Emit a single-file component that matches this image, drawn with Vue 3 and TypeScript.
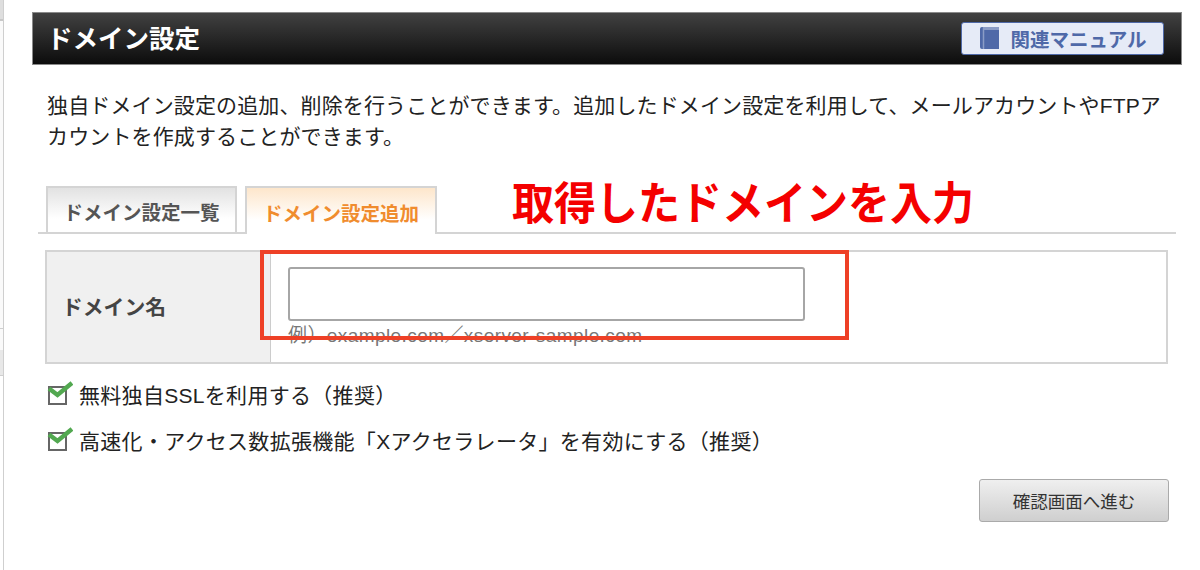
<script setup lang="ts">
const checks: string[] = [
  '無料独自SSLを利用する（推奨）',
  '高速化・アクセス数拡張機能「Xアクセラレータ」を有効にする（推奨）',
]
</script>

<template>
  <div class="page">
    <div class="edge"></div>
    <main class="content">
      <header class="head">
        <h1 class="title">ドメイン設定</h1>
        <a class="manual">
          <svg class="book" viewBox="0 0 20 24" width="20" height="24">
            <path d="M3 1h17v22H3a2 2 0 0 1-2-2V3a2 2 0 0 1 2-2z" fill="#4f69a8" />
            <path d="M4.500 1v22" stroke="#8b9cc6" stroke-width="1.500" />
            <path d="M5 1h15v3H5z" fill="#8b9cc6" />
          </svg>
          <span>関連マニュアル</span>
        </a>
      </header>

      <p class="lead">独自ドメイン設定の追加、削除を行うことができます。追加したドメイン設定を利用して、メールアカウントやFTPアカウントを作成することができます。</p>

      <nav class="tabs">
        <div class="tab">ドメイン設定一覧</div>
        <div class="tab active">ドメイン設定追加</div>
      </nav>

      <section class="form">
        <div class="label">ドメイン名</div>
        <div class="field">
          <input class="input" type="text" />
          <div class="hint">例）example.com／xserver-sample.com</div>
        </div>
      </section>

      <div v-for="c in checks" :key="c" class="check">
        <svg class="box" viewBox="0 0 26 26" width="26" height="26">
          <rect x="2" y="6" width="17" height="17" fill="#fff" stroke="#666" stroke-width="2" />
          <path d="M2 7.500L10.500 14L25 2" fill="none" stroke="#52a850" stroke-width="4.500" />
        </svg>
        <span>{{ c }}</span>
      </div>

      <div class="actions">
        <button class="next" type="button">確認画面へ進む</button>
      </div>
    </main>

    <div class="note">取得したドメインを入力</div>
    <div class="mark"></div>
  </div>
</template>

<style>
html, body { margin: 0; background: #fff; }
</style>

<style scoped>
.page {
  position: relative;
  width: 1200px;
  height: 570px;
  overflow: hidden;
  background: #fff;
  font-family: "Liberation Sans", "Noto Sans CJK JP", sans-serif;
  color: #222;
}
.edge {
  position: absolute;
  left: 0;
  top: 0;
  bottom: 0;
  width: 3px;
  border-right: 1px solid #cfcfcf;
  background: linear-gradient(
    #dedede 0 19px,
    #c8c8c8 19px 21px,
    #fafafa 21px 328px,
    #cfcfcf 328px 329px,
    #fafafa 329px 350px,
    #e8e8e8 350px 375px,
    #cfcfcf 375px 376px,
    #fff 376px
  );
}
.content {
  padding: 12px 18px 0 32px;
}
.head {
  box-sizing: border-box;
  height: 53px;
  display: flex;
  align-items: center;
  justify-content: space-between;
  padding: 0 17px 0 14px;
  border: 1px solid #8a8a8a;
  background: linear-gradient(#414141, #0c0c0c);
}
.title {
  margin: 0 0 5px;
  color: #fff;
  font-size: 25.500px;
  font-weight: 700;
}
.manual {
  box-sizing: border-box;
  width: 203px;
  height: 33px;
  margin-top: -1px;
  display: flex;
  align-items: center;
  justify-content: center;
  gap: 12px;
  background: #e6ebf7;
  border: 1px solid #4f69a8;
  border-radius: 3px;
  color: #4f69a8;
  font-size: 19.500px;
  font-weight: 700;
}
.lead {
  margin: 0;
  padding: 25px 18px 0 15px;
  font-size: 21px;
  line-height: 31px;
  letter-spacing: 0.130px;
}
.tabs {
  box-sizing: border-box;
  display: flex;
  gap: 8px;
  width: 1138px;
  height: 48px;
  margin: 34px 0 0 6px;
  padding-left: 8px;
  border-bottom: 2px solid #d4d4d4;
}
.tab {
  box-sizing: border-box;
  width: 191px;
  height: 46px;
  display: flex;
  align-items: center;
  justify-content: center;
  padding-top: 2px;
  border: 2px solid #d4d4d4;
  border-bottom: 0;
  background: linear-gradient(#e2e2e2, #fff 70%);
  color: #555;
  font-size: 19.500px;
  font-weight: 700;
}
.tab.active {
  width: 192px;
  height: 48px;
  background: linear-gradient(#fde6cb, #fff 70%);
  color: #f08c2e;
}
.form {
  display: flex;
  box-sizing: border-box;
  width: 1123px;
  height: 114px;
  margin: 16px 0 0 13px;
  border: 2px solid #d4d4d4;
}
.label {
  box-sizing: border-box;
  width: 224px;
  display: flex;
  align-items: center;
  padding: 0 0 2px 15px;
  background: #f0f0f0;
  border-right: 1px solid #ccc;
  color: #444;
  font-size: 20.800px;
  font-weight: 700;
}
.field {
  padding: 15px 0 0 17px;
}
.input {
  display: block;
  box-sizing: border-box;
  width: 517px;
  height: 54px;
  background: #fff;
  border: 2px solid #a6a6a6;
  border-radius: 3px;
  outline: none;
}
.hint {
  margin-top: 3px;
  color: #777;
  font-size: 19px;
  line-height: 24px;
  letter-spacing: 0.420px;
  white-space: nowrap;
}
.check {
  display: flex;
  align-items: center;
  gap: 6px;
  margin-left: 15px;
  height: 46px;
  font-size: 21px;
  letter-spacing: 0.300px;
}
.form + .check {
  margin-top: 7px;
}
.box {
  flex: none;
  margin-top: -1px;
}
.actions {
  display: flex;
  justify-content: flex-end;
  margin-top: 16px;
  width: 1137px;
}
.next {
  box-sizing: border-box;
  width: 190px;
  height: 43px;
  border: 1px solid #aaa;
  border-radius: 3px;
  background: linear-gradient(#efefef, #cfcfcf);
  color: #333;
  font-family: inherit;
  font-size: 17.500px;
}
.note {
  position: absolute;
  left: 512px;
  top: 175px;
  color: #f40000;
  font-size: 42px;
  line-height: 60px;
  font-weight: 700;
  white-space: nowrap;
  transform: scaleY(1.08);
}
.mark {
  position: absolute;
  left: 260px;
  top: 250px;
  width: 589px;
  height: 90px;
  box-sizing: border-box;
  border: 4px solid #ee4026;
}
</style>
